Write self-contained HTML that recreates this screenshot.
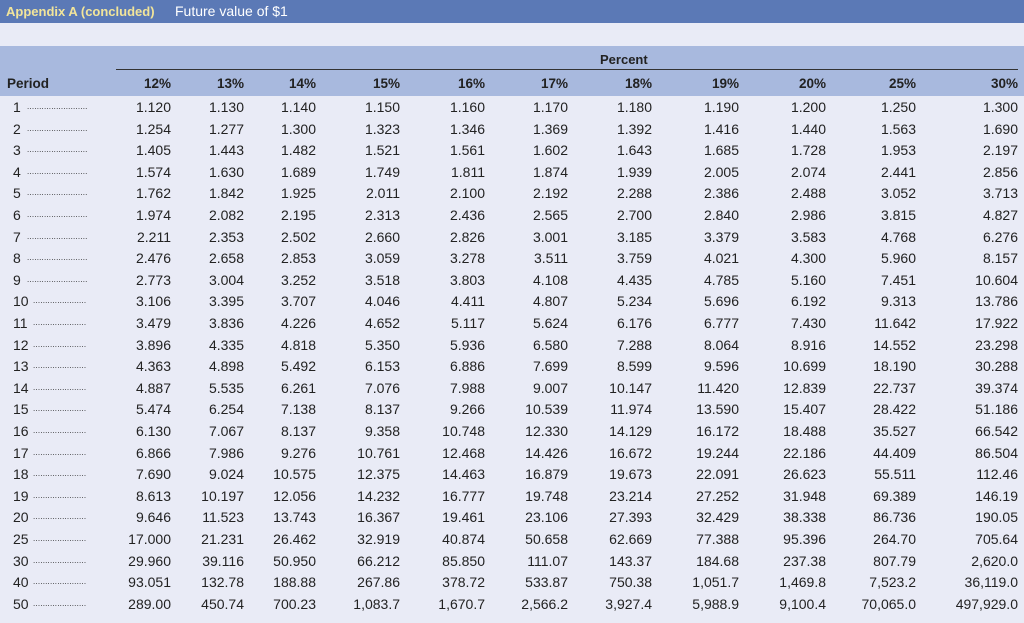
<!DOCTYPE html>
<html><head><meta charset="utf-8"><style>
body{margin:0;width:1024px;height:623px;background:#e9ebf6;font-family:"Liberation Sans",sans-serif;color:#222;position:relative;overflow:hidden}
.top{position:absolute;left:0;top:0;width:1024px;height:23px;background:#5b79b6}
.top b{position:absolute;left:6px;top:4px;color:#f2e59a;font-size:13px;font-weight:bold}
.top span{position:absolute;left:175px;top:3px;color:#fff;font-size:14px}
.hd{position:absolute;left:0;top:46px;width:1024px;height:50px;background:#a8b9de}
.pct{position:absolute;left:600px;top:52px;font-size:13px;font-weight:bold}
.ln{position:absolute;left:116px;top:69px;width:902px;height:1px;background:#333}
.r{position:absolute;left:0;width:1018px;height:22px;line-height:22px;display:flex;font-size:14px;white-space:nowrap}
.r span{text-align:right;display:block}
.r span:nth-child(1){width:120px;text-align:left;padding-left:13px;box-sizing:border-box;position:relative}
.r span:nth-child(2){width:51px}.r span:nth-child(3){width:73px}.r span:nth-child(4){width:72px}
.r span:nth-child(5){width:84px}.r span:nth-child(6){width:85px}.r span:nth-child(7){width:83px}
.r span:nth-child(8){width:84px}.r span:nth-child(9){width:87px}.r span:nth-child(10){width:87px}
.r span:nth-child(11){width:90px}.r span:nth-child(12){width:102px}
.h{font-weight:bold;font-size:13.5px}
.h span:nth-child(1){padding-left:7px}
i{font-style:normal;position:absolute;left:27px;top:0;font-size:8px;letter-spacing:0.2px}
i.w{left:33px}
</style></head><body>
<div class="top"><b>Appendix A (concluded)</b><span>Future value of $1</span></div>
<div class="hd"></div>
<div class="pct">Percent</div>
<div class="ln"></div>
<div class="r h" style="top:73px"><span>Period</span><span>12%</span><span>13%</span><span>14%</span><span>15%</span><span>16%</span><span>17%</span><span>18%</span><span>19%</span><span>20%</span><span>25%</span><span>30%</span></div>
<div class="r" style="top:96px"><span>1<i>.........................</i></span><span>1.120</span><span>1.130</span><span>1.140</span><span>1.150</span><span>1.160</span><span>1.170</span><span>1.180</span><span>1.190</span><span>1.200</span><span>1.250</span><span>1.300</span></div>
<div class="r" style="top:117.6px"><span>2<i>.........................</i></span><span>1.254</span><span>1.277</span><span>1.300</span><span>1.323</span><span>1.346</span><span>1.369</span><span>1.392</span><span>1.416</span><span>1.440</span><span>1.563</span><span>1.690</span></div>
<div class="r" style="top:139.2px"><span>3<i>.........................</i></span><span>1.405</span><span>1.443</span><span>1.482</span><span>1.521</span><span>1.561</span><span>1.602</span><span>1.643</span><span>1.685</span><span>1.728</span><span>1.953</span><span>2.197</span></div>
<div class="r" style="top:160.8px"><span>4<i>.........................</i></span><span>1.574</span><span>1.630</span><span>1.689</span><span>1.749</span><span>1.811</span><span>1.874</span><span>1.939</span><span>2.005</span><span>2.074</span><span>2.441</span><span>2.856</span></div>
<div class="r" style="top:182.4px"><span>5<i>.........................</i></span><span>1.762</span><span>1.842</span><span>1.925</span><span>2.011</span><span>2.100</span><span>2.192</span><span>2.288</span><span>2.386</span><span>2.488</span><span>3.052</span><span>3.713</span></div>
<div class="r" style="top:204px"><span>6<i>.........................</i></span><span>1.974</span><span>2.082</span><span>2.195</span><span>2.313</span><span>2.436</span><span>2.565</span><span>2.700</span><span>2.840</span><span>2.986</span><span>3.815</span><span>4.827</span></div>
<div class="r" style="top:225.6px"><span>7<i>.........................</i></span><span>2.211</span><span>2.353</span><span>2.502</span><span>2.660</span><span>2.826</span><span>3.001</span><span>3.185</span><span>3.379</span><span>3.583</span><span>4.768</span><span>6.276</span></div>
<div class="r" style="top:247.2px"><span>8<i>.........................</i></span><span>2.476</span><span>2.658</span><span>2.853</span><span>3.059</span><span>3.278</span><span>3.511</span><span>3.759</span><span>4.021</span><span>4.300</span><span>5.960</span><span>8.157</span></div>
<div class="r" style="top:268.8px"><span>9<i>.........................</i></span><span>2.773</span><span>3.004</span><span>3.252</span><span>3.518</span><span>3.803</span><span>4.108</span><span>4.435</span><span>4.785</span><span>5.160</span><span>7.451</span><span>10.604</span></div>
<div class="r" style="top:290.4px"><span>10<i class="w">......................</i></span><span>3.106</span><span>3.395</span><span>3.707</span><span>4.046</span><span>4.411</span><span>4.807</span><span>5.234</span><span>5.696</span><span>6.192</span><span>9.313</span><span>13.786</span></div>
<div class="r" style="top:312px"><span>11<i class="w">......................</i></span><span>3.479</span><span>3.836</span><span>4.226</span><span>4.652</span><span>5.117</span><span>5.624</span><span>6.176</span><span>6.777</span><span>7.430</span><span>11.642</span><span>17.922</span></div>
<div class="r" style="top:333.6px"><span>12<i class="w">......................</i></span><span>3.896</span><span>4.335</span><span>4.818</span><span>5.350</span><span>5.936</span><span>6.580</span><span>7.288</span><span>8.064</span><span>8.916</span><span>14.552</span><span>23.298</span></div>
<div class="r" style="top:355.2px"><span>13<i class="w">......................</i></span><span>4.363</span><span>4.898</span><span>5.492</span><span>6.153</span><span>6.886</span><span>7.699</span><span>8.599</span><span>9.596</span><span>10.699</span><span>18.190</span><span>30.288</span></div>
<div class="r" style="top:376.8px"><span>14<i class="w">......................</i></span><span>4.887</span><span>5.535</span><span>6.261</span><span>7.076</span><span>7.988</span><span>9.007</span><span>10.147</span><span>11.420</span><span>12.839</span><span>22.737</span><span>39.374</span></div>
<div class="r" style="top:398.4px"><span>15<i class="w">......................</i></span><span>5.474</span><span>6.254</span><span>7.138</span><span>8.137</span><span>9.266</span><span>10.539</span><span>11.974</span><span>13.590</span><span>15.407</span><span>28.422</span><span>51.186</span></div>
<div class="r" style="top:420px"><span>16<i class="w">......................</i></span><span>6.130</span><span>7.067</span><span>8.137</span><span>9.358</span><span>10.748</span><span>12.330</span><span>14.129</span><span>16.172</span><span>18.488</span><span>35.527</span><span>66.542</span></div>
<div class="r" style="top:441.6px"><span>17<i class="w">......................</i></span><span>6.866</span><span>7.986</span><span>9.276</span><span>10.761</span><span>12.468</span><span>14.426</span><span>16.672</span><span>19.244</span><span>22.186</span><span>44.409</span><span>86.504</span></div>
<div class="r" style="top:463.2px"><span>18<i class="w">......................</i></span><span>7.690</span><span>9.024</span><span>10.575</span><span>12.375</span><span>14.463</span><span>16.879</span><span>19.673</span><span>22.091</span><span>26.623</span><span>55.511</span><span>112.46</span></div>
<div class="r" style="top:484.8px"><span>19<i class="w">......................</i></span><span>8.613</span><span>10.197</span><span>12.056</span><span>14.232</span><span>16.777</span><span>19.748</span><span>23.214</span><span>27.252</span><span>31.948</span><span>69.389</span><span>146.19</span></div>
<div class="r" style="top:506.4px"><span>20<i class="w">......................</i></span><span>9.646</span><span>11.523</span><span>13.743</span><span>16.367</span><span>19.461</span><span>23.106</span><span>27.393</span><span>32.429</span><span>38.338</span><span>86.736</span><span>190.05</span></div>
<div class="r" style="top:528px"><span>25<i class="w">......................</i></span><span>17.000</span><span>21.231</span><span>26.462</span><span>32.919</span><span>40.874</span><span>50.658</span><span>62.669</span><span>77.388</span><span>95.396</span><span>264.70</span><span>705.64</span></div>
<div class="r" style="top:549.6px"><span>30<i class="w">......................</i></span><span>29.960</span><span>39.116</span><span>50.950</span><span>66.212</span><span>85.850</span><span>111.07</span><span>143.37</span><span>184.68</span><span>237.38</span><span>807.79</span><span>2,620.0</span></div>
<div class="r" style="top:571.2px"><span>40<i class="w">......................</i></span><span>93.051</span><span>132.78</span><span>188.88</span><span>267.86</span><span>378.72</span><span>533.87</span><span>750.38</span><span>1,051.7</span><span>1,469.8</span><span>7,523.2</span><span>36,119.0</span></div>
<div class="r" style="top:592.8px"><span>50<i class="w">......................</i></span><span>289.00</span><span>450.74</span><span>700.23</span><span>1,083.7</span><span>1,670.7</span><span>2,566.2</span><span>3,927.4</span><span>5,988.9</span><span>9,100.4</span><span>70,065.0</span><span>497,929.0</span></div>
</body></html>
